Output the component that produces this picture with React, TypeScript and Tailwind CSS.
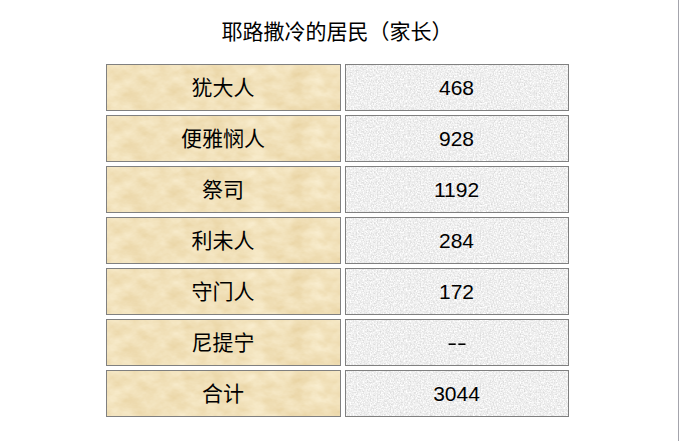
import React, { useId } from 'react';

type Row = {
    name: string,
    count: string
}

const rows: Row[] = [
    { name: '犹大人', count: '468' },
    { name: '便雅悯人', count: '928' },
    { name: '祭司', count: '1192' },
    { name: '利未人', count: '284' },
    { name: '守门人', count: '172' },
    { name: '尼提宁', count: '--' },
    { name: '合计', count: '3044' },
];

// paper textures for the two columns
function Paper({ kind }: { kind: 'parchment' | 'stone' }) {
    const id = useId().replace(/:/g, '');
    const parchment = kind === 'parchment';

    return (
        <svg className="absolute inset-0 w-full h-full" preserveAspectRatio="none">
            <filter id={id} x="0" y="0" width="100%" height="100%" colorInterpolationFilters="sRGB">
                {parchment ? (
                    <>
                        <feTurbulence type="fractalNoise" baseFrequency="0.05 0.08" numOctaves={4} seed={7} />
                        <feColorMatrix
                            type="matrix"
                            values="0.08 0 0 0 0.905  0.13 0 0 0 0.815  0.22 0 0 0 0.615  0 0 0 0 1"
                        />
                    </>
                ) : (
                    <>
                        <feTurbulence type="fractalNoise" baseFrequency="0.7" numOctaves={2} seed={3} />
                        <feColorMatrix
                            type="matrix"
                            values="0.26 0 0 0 0.805  0.26 0 0 0 0.805  0.26 0 0 0 0.805  0 0 0 0 1"
                        />
                    </>
                )}
            </filter>
            <rect width="100%" height="100%" filter={`url(#${id})`} />
        </svg>
    );
}

function Cell({ kind, children }: { kind: 'parchment' | 'stone', children: React.ReactNode }) {
    const dash = children === '--';

    return (
        <div className="relative flex items-center justify-center h-[47px] border border-[#808080] overflow-hidden">
            <Paper kind={kind} />
            <span className={`relative text-[21px] leading-none text-black ${dash ? 'inline-block scale-x-[1.4]' : ''}`}>
                {children}
            </span>
        </div>
    );
}

export default function App() {
    return (
        <div
            className="w-[680px] h-[441px] bg-white flex"
            style={{ fontFamily: '"Liberation Sans", "Noto Sans CJK SC", sans-serif' }}
        >
            <div className="w-[679px] h-full border-r border-[#a4a4ac]">
                <div className="w-[674px] flex flex-col items-center pt-[16px]">
                    <h1 className="h-[32px] leading-[32px] text-[21px] font-normal text-black">
                        耶路撒冷的居民（家长）
                    </h1>

                    <div className="mt-[16px] grid grid-cols-[235px_224px] gap-x-[4px] gap-y-[4px]">
                        {rows.map((row, key) => (
                            <React.Fragment key={key}>
                                <Cell kind="parchment">{row.name}</Cell>
                                <Cell kind="stone">{row.count}</Cell>
                            </React.Fragment>
                        ))}
                    </div>
                </div>
            </div>
        </div>
    );
}
